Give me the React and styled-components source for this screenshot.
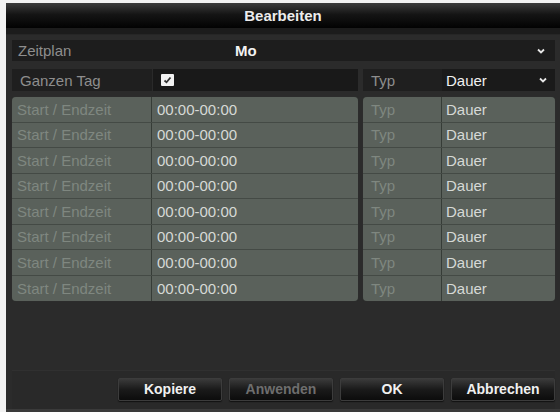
import React from "react";
import styled, { createGlobalStyle } from "styled-components";

const Global = createGlobalStyle`
  html, body { margin: 0; padding: 0; background: #f2f2f2; }
  body { font-family: "Liberation Sans", Arial, sans-serif; }
  * { box-sizing: border-box; }
`;

const Page = styled.div`
  width: 560px;
  height: 412px;
  padding: 3px 0 0 6px;
  overflow: hidden;
`;

const Panel = styled.div`
  width: 554px;
  height: 409px;
  background: #2b2b2b;
  display: flex;
  flex-direction: column;
`;

const TitleBar = styled.div`
  height: 25px;
  flex: none;
  background: linear-gradient(#3c3c3c 0%, #151515 45%, #020202 100%);
  color: #ececec;
  font-weight: bold;
  font-size: 15px;
  display: flex;
  align-items: center;
  justify-content: center;
`;

const Band = styled.div`
  height: 7px;
  flex: none;
  background: #1c1c1c;
  border-bottom: 1px solid #262626;
`;

const Body = styled.div`
  padding: 5px 5px 0 6px;
  display: flex;
  flex-direction: column;
  flex: 1;
`;

const ScheduleRow = styled.div`
  height: 21px;
  background: #1d1d1d;
  display: grid;
  grid-template-columns: 223px 1fr 18px;
  align-items: center;
  font-size: 15px;
`;

const Label = styled.div`
  color: ${(p) => p.$color || "#8e8e8e"};
  padding-left: ${(p) => p.$pad ?? 6}px;
  font-weight: ${(p) => (p.$bold ? "bold" : "normal")};
  white-space: nowrap;
  overflow: hidden;
`;

const Arrow = () => (
  <svg width="8" height="6" viewBox="0 0 8 6">
    <path d="M1 1.5 L4 4.5 L7 1.5" stroke="#e6e6e6" strokeWidth="1.8" fill="none" />
  </svg>
);

const AllDayRow = styled.div`
  margin-top: 8px;
  height: 22px;
  display: grid;
  grid-template-columns: 140px 206px 5px 79px 113px;
  font-size: 15px;
`;

const Cell = styled.div`
  background: ${(p) => p.$bg};
  display: flex;
  align-items: center;
  justify-content: space-between;
  padding-right: 8px;
  border-left: ${(p) => (p.$edge ? "1px solid #2a2a2a" : "none")};
`;

const Spacer = styled.div``;

const Check = styled.div`
  width: 13px;
  height: 12px;
  margin-left: 8px;
  background: #f2f2f2;
  border-radius: 1px;
  display: flex;
  align-items: center;
  justify-content: center;
`;

const Section = styled.div`
  margin-top: 6px;
  display: flex;
  gap: 5px;
`;

const Group = styled.div`
  width: ${(p) => p.$w}px;
  background: #5a615b;
  border-radius: 4px;
  overflow: hidden;
  display: flex;
  flex-direction: column;
  box-shadow: 0 0 1px #3c433d;
`;

const Row = styled.div`
  height: 25.5px;
  display: grid;
  grid-template-columns: ${(p) => p.$cols};
  align-items: center;
  font-size: 15px;
  border-bottom: 1.5px solid #444a45;
  &:last-child { border-bottom: none; }
`;

const Faded = styled.div`
  color: #7f8780;
  padding-left: ${(p) => p.$pad}px;
  height: 100%;
  display: flex;
  align-items: center;
  border-right: ${(p) => (p.$line ? "1px solid #363c37" : "none")};
  white-space: nowrap;
`;

const Value = styled.div`
  color: #d6d9d6;
  padding-left: ${(p) => p.$pad}px;
  white-space: nowrap;
`;

const Footer = styled.div`
  margin-top: auto;
  height: 39px;
  border-top: 1px solid #303030;
  background: #292929;
  display: flex;
  justify-content: flex-end;
  align-items: center;
  gap: 7px;
  padding: 0 0 2px 0;
`;

const Button = styled.div`
  width: 104px;
  height: 23px;
  border: 1px solid #3c3c3c;
  border-radius: 2px;
  background: linear-gradient(#3a3a3a 0%, #1a1a1a 50%, #0c0c0c 100%);
  color: ${(p) => (p.$disabled ? "#6e6e6e" : "#f0f0f0")};
  font-weight: bold;
  font-size: 14px;
  display: flex;
  align-items: center;
  justify-content: center;
  box-shadow: 0 1px 1px #111;
`;

const BottomLine = styled.div`
  height: 3px;
  background: #3a3a3a;
  margin: 0 -5px 0 -6px;
`;

const rows = Array.from({ length: 8 });

export default function App() {
  return (
    <Page>
      <Global />
      <Panel>
        <TitleBar>Bearbeiten</TitleBar>
        <Band />
        <Body>
          <ScheduleRow>
            <Label>Zeitplan</Label>
            <Label $color="#f2f2f2" $bold $pad={0}>Mo</Label>
            <Arrow />
          </ScheduleRow>
          <AllDayRow>
            <Cell $bg="#1f1f1f"><Label $pad={8}>Ganzen Tag</Label></Cell>
            <Cell $bg="#191919" $edge>
              <Check>
                <svg width="9" height="8" viewBox="0 0 9 8">
                  <path d="M1.5 4.5 L3.5 6.3 L7.5 1.5" stroke="#333" strokeWidth="1.8" fill="none" />
                </svg>
              </Check>
            </Cell>
            <Spacer />
            <Cell $bg="#1f1f1f"><Label $pad={8}>Typ</Label></Cell>
            <Cell $bg="#1a1a1a">
              <Label $color="#f0f0f0" $pad={4}>Dauer</Label>
              <Arrow />
            </Cell>
          </AllDayRow>
          <Section>
            <Group $w={346}>
              {rows.map((_, i) => (
                <Row key={i} $cols="140px 1fr">
                  <Faded $pad={5} $line>Start / Endzeit</Faded>
                  <Value $pad={5}>00:00-00:00</Value>
                </Row>
              ))}
            </Group>
            <Group $w={192}>
              {rows.map((_, i) => (
                <Row key={i} $cols="79px 1fr">
                  <Faded $pad={8} $line>Typ</Faded>
                  <Value $pad={4}>Dauer</Value>
                </Row>
              ))}
            </Group>
          </Section>
          <Footer>
            <Button>Kopiere</Button>
            <Button $disabled>Anwenden</Button>
            <Button>OK</Button>
            <Button>Abbrechen</Button>
          </Footer>
          <BottomLine />
        </Body>
      </Panel>
    </Page>
  );
}
